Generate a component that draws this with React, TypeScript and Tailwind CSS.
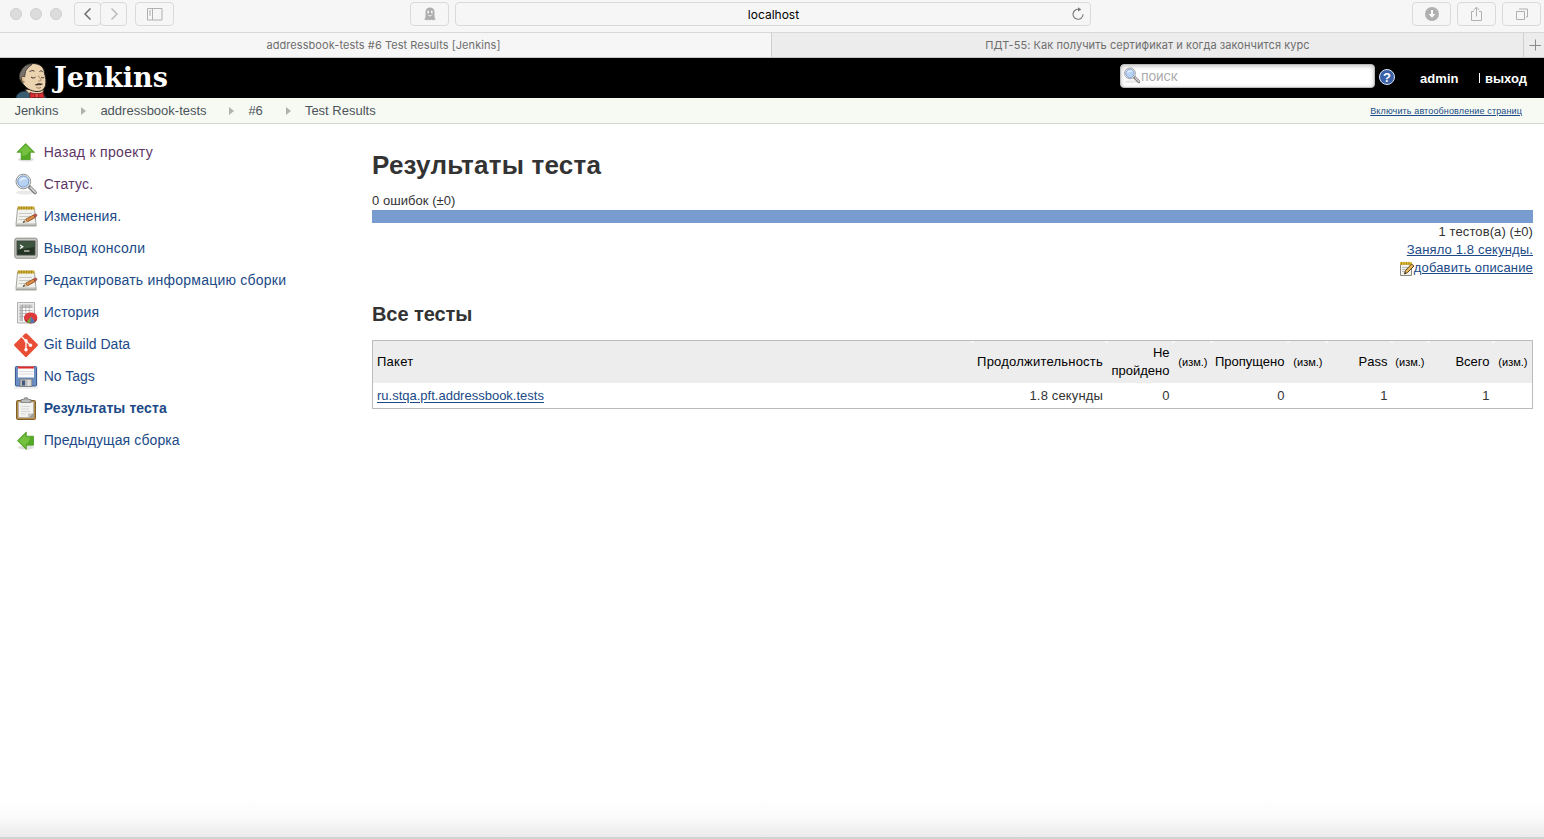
import React from 'react';

const SANS = "font-['Liberation_Sans',Arial,sans-serif]";

function Chevron({ className, d }: { className: string; d: string }) {
  return (
    <svg width="12" height="14" viewBox="0 0 12 14" fill="none" stroke="currentColor" strokeWidth="1.5" className={className}>
      <path d={d} />
    </svg>
  );
}

function ToolButton({ className = '', children }: { className?: string; children: React.ReactNode }) {
  return (
    <div className={'flex h-[24px] w-[39px] shrink-0 items-center justify-center rounded-[4px] border border-[#dadada] bg-[#f6f6f6] ' + className}>
      {children}
    </div>
  );
}

function Toolbar() {
  return (
    <div className="flex h-[33px] shrink-0 items-start border-b border-[#d8d8d8] bg-[#f6f6f6] pt-[2px]">
      <div className="flex h-[24px] w-[74px] items-center gap-[8px] pl-[10px]">
        <span className="size-[12px] rounded-full border border-[#cfcfcf] bg-[#dcdcdc]" />
        <span className="size-[12px] rounded-full border border-[#cfcfcf] bg-[#dcdcdc]" />
        <span className="size-[12px] rounded-full border border-[#cfcfcf] bg-[#dcdcdc]" />
      </div>
      <div className="flex">
        <div className="flex h-[24px] w-[27px] items-center justify-center rounded-[4px] border border-[#dadada]">
          <Chevron className="text-[#6f6f6f]" d="M8.500 1.500 3 7l5.500 5.500" />
        </div>
        <div className="-ml-px flex h-[24px] w-[27px] items-center justify-center rounded-[4px] border border-[#dadada]">
          <Chevron className="text-[#bcbcbc]" d="M3.500 1.500 9 7l-5.500 5.500" />
        </div>
      </div>
      <ToolButton className="ml-[8px]">
        <svg width="16" height="13" viewBox="0 0 16 13" fill="none" stroke="#b0b0b0">
          <path d="M.5.500h14.500v11.500H.5zM5.500.500V12M2 3h2M2 5h2M2 7h2" />
        </svg>
      </ToolButton>
      <ToolButton className="ml-[236px]">
        <svg width="12" height="14" viewBox="0 0 12 14" fill="#adadad">
          <path d="M6 .5C3.300.500 1.500 2.300 1.500 4.800V9c0 1.500-.4 2.600-1.500 3.800h2.200l.8.700 1-.7h1l1 .7 1-.7h1l1 .7.8-.7H12c-1.100-1.200-1.500-2.300-1.500-3.800V4.800C10.500 2.300 8.700.500 6 .5Z" />
          <ellipse cx="4.200" cy="5" rx=".9" ry="1.400" fill="#f6f6f6" />
          <ellipse cx="7.800" cy="5" rx=".9" ry="1.400" fill="#f6f6f6" />
          <path d="M3.700 7.500c.8 1.900 3.800 1.900 4.600 0" stroke="#f6f6f6" strokeWidth=".9" fill="none" />
        </svg>
      </ToolButton>
      <div className="ml-[6px] flex h-[24px] w-[636px] items-center rounded-[4px] border border-[#dadada]">
        <span className="mt-px ml-[17px] flex-1 text-center font-['Inter',sans-serif] text-[12px] text-black">localhost</span>
        <svg width="14" height="14" viewBox="0 0 14 14" className="mr-[5px] ml-[-3px]" fill="none" stroke="#777" strokeWidth="1.100">
          <path d="M7.500 2.300A5 5 0 1 0 12 7.200" />
          <path d="M7 .2 10.400 2.400 7 4.600z" fill="#777" stroke="none" />
        </svg>
      </div>
      <ToolButton className="ml-[321px]">
        <svg width="14" height="14" viewBox="0 0 14 14">
          <circle cx="7" cy="7" r="7" fill="#b0b0b0" />
          <path d="M6 3h2v4h2.400L7 10.800 3.600 7H6z" fill="#f8f8f8" />
        </svg>
      </ToolButton>
      <ToolButton className="ml-[6px]">
        <svg width="13" height="16" viewBox="0 0 13 16" fill="none" stroke="#b0b0b0" className="-mt-px">
          <path d="M4 5.500H1.500v9h10v-9H9M6.500 10.500V1.200M3.700 4l2.800-2.800L9.300 4" />
        </svg>
      </ToolButton>
      <ToolButton className="ml-[6px]">
        <svg width="14" height="13" viewBox="0 0 14 13" fill="none" stroke="#b0b0b0">
          <path d="M1.500 3.500h8v8h-8zM4 1h8.500v8H11" />
        </svg>
      </ToolButton>
    </div>
  );
}

function TabBar() {
  return (
    <div className="flex h-[25px] shrink-0 border-b border-[#c8c8c8] bg-[#ececec] font-['Inter',sans-serif] text-[11px] leading-[24px] text-[#6e6e6e]">
      <div className="w-[771px] bg-[#f6f6f6] pr-[4px] text-center"><span className="tracking-[0.06px]">addressbook-tests #6 Test Results [Jenkins]</span></div>
      <div className="w-[753px] border-x border-[#cfcfcf] text-center"><span className="tracking-[0.07px]">ПДТ-55: Как получить сертификат и когда закончится курс</span></div>
      <div className="flex flex-1 items-center justify-center pl-[2px]">
        <svg width="12" height="12" viewBox="0 0 12 12" stroke="#8a8a8a"><path d="M6.500 .5v11M.5 6.500h12" /></svg>
      </div>
    </div>
  );
}

function Butler() {
  return (
    <svg width="34" height="36" viewBox="0 0 34 36">
      <path d="M1 37c0-3 1-5.500 6-7.500l7-1 14 3 4 5.500z" fill="#3a5c72" stroke="#182c38" />
      <path d="M10 27.500l4 4 6 .5h7l2-4z" fill="#ecd3b0" stroke="#28231f" strokeWidth=".6" />
      <path d="M7.500 21C4 18 4 13 6 10c2-5 6-8.500 12-8.500 7 0 11.500 4 11.500 10 1.500 4 1.800 8 1 12-1.200 4-4 6-8.500 6-6 0-12-4-14.500-8.500z" fill="#ecd3b0" stroke="#28231f" />
      <path d="M17 2c-5 .3-8.500 2-11 7-1.500 2-2 5-1.300 8l2.300 2.500 1-3 1.700-2 .8-5c1.500-3 3.500-5 6.500-7z" fill="#77716c" stroke="#292624" strokeWidth=".7" />
      <path d="M9 14.500c-2-.8-3 .6-2.500 2.500.2 2 1.200 3.300 3 3" fill="#e2c096" stroke="#453526" strokeWidth=".8" />
      <path d="M14.500 10c1-1.700 3.500-1.800 5-.8M24.500 9.500c1-1 2.500-.8 3.500.7" fill="none" stroke="#352a22" strokeWidth=".9" />
      <path d="M16 15c1 1.300 3.500 1.300 4.500 0M26 15c.8 1 2.500 1 3.300.3" fill="none" stroke="#352a22" strokeWidth="1" />
      <path d="M23.500 13.500c.3 2.500 3 3 2.600 4.700-.5 1.300-2.300 1.200-3 .3" fill="none" stroke="#9a7654" strokeWidth=".8" />
      <path d="M19.500 22.500c1.500.3 2.500-1.400 4-1.200 1.500-.5 3 .3 4.500.5-1.200 1.600-2.800 1.600-4.200 1.100-1.300.8-3.300.6-4.300-.4z" fill="#40352e" />
      <path d="M21.500 25.500c1.500.8 3 .8 4.500 0" fill="none" stroke="#8a5846" strokeWidth=".8" />
      <path d="M15 30.500l6.500 2 7-2 .5 6-7.500-1.500-6.500 1.500z" fill="#d92f33" stroke="#6d1715" strokeWidth=".8" />
      <path d="M20 31.500h3.500v4H20z" fill="#ee4b4d" stroke="#6d1715" strokeWidth=".6" />
    </svg>
  );
}

function Magnifier({ size }: { size: number }) {
  return (
    <svg width={size} height={size} viewBox="0 0 24 24" className="shrink-0">
      <ellipse cx="11" cy="19.500" rx="9" ry="2" fill="#e9e9e9" />
      <path d="m15 13.500 6 6" stroke="#828282" strokeWidth="3.800" strokeLinecap="round" />
      <path d="m16.500 14.500 4.700 4.700" stroke="#d8d8d8" strokeWidth="1.600" strokeLinecap="round" />
      <circle cx="9.300" cy="8.500" r="7.300" fill="#f5f5f5" stroke="#8e8e8e" />
      <circle cx="9.300" cy="8.500" r="5.600" fill="#b7d1f2" stroke="#6d94c8" />
      <path d="M5 8.500C5.500 4.500 10.500 3 13.300 6c-2 0-6 .8-8.300 2.500z" fill="#e6f0fc" />
    </svg>
  );
}

function Notepad() {
  return (
    <svg width="24" height="24" viewBox="0 0 24 24">
      <path d="M3.500 3.500h17L22 19.500H2z" fill="#f1f1ee" stroke="#a3a39e" />
      <path d="M2 18.500h20.500v3H1.500z" fill="#a5a5a0" />
      <path d="M2.500 19h19" stroke="#dcdcd8" />
      <path d="M5 8.500h13M5 11.500h12M4.500 14.500h8" stroke="#c9c9c6" />
      <path d="M3.500 1.500h17v3h-17z" fill="#c9a92f" />
      <path d="M5 1.500v3M7.500 1.500v3M10 1.500v3M12.500 1.500v3M15 1.500v3M17.500 1.500v3" stroke="#9f7f18" strokeWidth=".8" />
      <path d="m11.500 14.200 8-4.200 2 2.400-8 4.400z" fill="#d98a45" stroke="#8d5423" strokeWidth=".8" />
      <path d="m19.300 10 1.700-1c1.400-.5 2.500 1 1.800 2l-1.500 1.200z" fill="#c65a4b" stroke="#8d4038" strokeWidth=".6" />
      <path d="m9 17.500 2.500-3.300 2 2.600z" fill="#ead2a8" stroke="#8d6a43" strokeWidth=".5" />
      <path d="m8.700 17.700 1.300-1.900.9 1.300z" fill="#222" />
    </svg>
  );
}

function SmallNotepad() {
  return (
    <svg width="16" height="16" viewBox="0 0 16 16">
      <path d="M1.500 3h11v11.500h-11z" fill="#f2f2ee" stroke="#888880" />
      <path d="M1 1.200h12v2.500H1z" fill="#dfb927" />
      <path d="M2.500.800v3M5 .8v3M7.500.800v3M10 .8v3" stroke="#9b7b12" strokeWidth=".8" />
      <path d="M3 6.500h7M3 8.500h5M3 10.500h3" stroke="#bbb" />
      <path d="m5.500 13 1-3.500 6-6.500 2.500 2-6.500 6.500z" fill="#e4b456" stroke="#54370f" strokeWidth=".9" />
      <path d="m5.500 13 .5-2 1.200 1.200z" fill="#222" />
    </svg>
  );
}

function Arrow({ left = false }: { left?: boolean }) {
  return (
    <svg width="24" height="24" viewBox="0 0 24 24">
      <ellipse cx="12" cy="18.500" rx="8" ry="2" fill="#dfdfdf" />
      <g transform={left ? 'matrix(0 1 1 0 1 0)' : undefined}>
        <path d="M11.700 2.500 20.500 11.300H16.200V18.500H7.200v-7.200H3z" fill="#54a924" stroke="#4b9a24" strokeWidth=".8" strokeLinejoin="round" />
        <path d="M11.700 3.800 5 10.600h3.200v4.400c3-.3 6-1.500 7-4.400h3.200z" fill="#7fc94a" opacity=".75" />
      </g>
    </svg>
  );
}

function Console() {
  return (
    <svg width="24" height="24" viewBox="0 0 24 24">
      <rect x=".8" y="1.200" width="22.400" height="20" rx="2" fill="#c9cac6" stroke="#888a85" />
      <rect x="3" y="4" width="18" height="14" fill="#233423" stroke="#4a4f48" />
      <path d="M3.500 4.500h17V10l-17 3z" fill="#48634a" opacity=".7" />
      <path d="m6 8 2.800 1.700L6 11.500M10 14h5.500" stroke="#fff" strokeWidth="1.200" fill="none" />
    </svg>
  );
}

function Graph() {
  return (
    <svg width="24" height="24" viewBox="0 0 24 24">
      <path d="M3.500 1.500h17v20.500h-17z" fill="#ececec" stroke="#b0b0b0" />
      <path d="M5.500 3.500h13v16.500h-13z" fill="#fdfdfd" />
      <path d="M5.500 3.500h13v3h-13zM5.500 3.500h3V20h-3z" fill="#c2c2c2" />
      <path d="M5.500 6.500h13M5.500 9.500h13M5.500 12.500h13M5.500 15.500h13M8.500 3.500v16.500M11.800 3.500v16.500M15.200 3.500v16.500" stroke="#aaa" strokeWidth=".8" />
      <ellipse cx="16.700" cy="17.500" rx="6.500" ry="5" fill="#9f1f1f" />
      <ellipse cx="16.700" cy="16.200" rx="6.500" ry="4.800" fill="#dd3b3b" />
      <path d="m17 15.500-.5 6.500c-1.500 0-2.800-.3-3.800-.9z" fill="#6fa83c" />
      <path d="m17 15.500 4 5.300c-1.200.8-2.800 1.200-4.500 1.200z" fill="#4f78bb" />
    </svg>
  );
}

function Git() {
  return (
    <svg width="24" height="24" viewBox="0 0 24 24">
      <path d="M10.900.7a1.600 1.600 0 0 1 2.200 0L23.400 10.900a1.600 1.600 0 0 1 0 2.200L13.100 23.400a1.600 1.600 0 0 1-2.200 0L.6 13.100a1.600 1.600 0 0 1 0-2.200z" fill="#e84e35" />
      <path d="m7.800 3.800 4.200 4.200v8.500M12 8l4 4" stroke="#fff" strokeWidth="1.300" fill="none" />
      <circle cx="12" cy="7.800" r="1.700" fill="#fff" />
      <circle cx="12" cy="16.800" r="1.700" fill="#fff" />
      <circle cx="16.500" cy="12.300" r="1.700" fill="#fff" />
    </svg>
  );
}

function Floppy() {
  return (
    <svg width="24" height="24" viewBox="0 0 24 24">
      <path d="M0 .5h24V24H0z" fill="#f0f0f0" />
      <rect x="1.500" y="1.500" width="21" height="19.500" rx="1" fill="#6b8fc4" stroke="#3c5c8f" />
      <path d="M4 1.500h16v11H4z" fill="#fafafa" />
      <path d="M4 1.500h16v2H4z" fill="#e22923" />
      <path d="M5 6.500h14M5 9h14" stroke="#dcdcdc" />
      <path d="M6 14h12v7.500H6z" fill="#b9bab7" stroke="#686868" strokeWidth=".6" />
      <path d="M8 15.500h3v5H8z" fill="#41597f" />
      <path d="M13.500 15h3v6h-3z" fill="#dedede" />
    </svg>
  );
}

function Clipboard() {
  return (
    <svg width="24" height="24" viewBox="0 0 24 24">
      <rect x="2.500" y="3.500" width="19" height="19" rx="1" fill="#b58a45" stroke="#80602a" />
      <path d="M4.500 5h15v15.500h-15z" fill="#f2f2f0" stroke="#aaa" strokeWidth=".6" />
      <path d="M7 9.500h9M7 12h8M7 14.500h9M7 17h5" stroke="#d6d6d6" />
      <path d="M14 20.500v-4h5z" fill="#c2c2c2" />
      <path d="M14.500 20.500l5-4.500v4.500z" fill="#9a9a98" />
      <path d="M7 2.500h2.500L10.500.800h3l1 1.700H17v3H7z" fill="#a6a7a3" stroke="#757672" strokeWidth=".7" />
      <path d="M8 4h8" stroke="#d5d5d2" />
    </svg>
  );
}

function Header() {
  return (
    <header className={'flex h-[40px] shrink-0 bg-black text-white ' + SANS}>
      <div className="flex flex-1 items-start pl-[15px] pt-[4px]">
        <Butler />
        <span className="ml-[5px] font-['DejaVu_Serif',serif] text-[27px] leading-[31px] font-bold tracking-[0.1px]">Jenkins</span>
      </div>
      <div className="mt-[6px] flex h-[24px] w-[255px] items-center rounded-[4px] border border-[#bbb] bg-white pl-[2px] shadow-[inset_0_1px_4px_#bbb]">
        <Magnifier size={18} />
        <span className="-mt-px font-['Inter',sans-serif] text-[13px] leading-[20px] tracking-[-0.2px] text-[#aaa]">поиск</span>
      </div>
      <div className="ml-[4px] mt-[11px] flex size-[16px] items-center justify-center rounded-full border border-[#dbe5f6] bg-[#3a60a8] text-[13px] leading-none font-bold">?</div>
      <div className="ml-[25px] w-[58px] pt-[11px] text-[13px] leading-[20px] font-bold tracking-[0.05px]">admin</div>
      <div className="flex w-[66px] pt-[11px] text-[13px] leading-[20px] font-bold">
        <span className="mt-[4px] mr-[5px] ml-[1px] h-[10px] w-px bg-white" />
        <span>выход</span>
      </div>
    </header>
  );
}

const crumbs: [string, string][] = [
  ['Jenkins', 'w-[86px]'],
  ['addressbook-tests', 'w-[148px]'],
  ['#6', 'w-[56.500px]'],
  ['Test Results', 'w-[90px]'],
];

function Breadcrumbs() {
  return (
    <nav className={'flex h-[26px] shrink-0 items-center border-b border-[#d3d7cf] bg-[#f6faf2] pl-[14.400px] text-[13px] text-[#4d545d] ' + SANS}>
      {crumbs.map(([label, width], i) => (
        <div key={label} className={'flex items-center justify-between whitespace-nowrap ' + width}>
          <span>{label}</span>
          {i < 3 && <svg width="5" height="8" viewBox="0 0 5 8" className="mr-[14px]"><path d="M0 0 5 4 0 8z" fill="#b0b2ae" /></svg>}
        </div>
      ))}
      <a className="mt-[3px] mr-[22px] ml-auto text-[9px] tracking-[0.13px] text-[#204a87] underline">Включить автообновление страниц</a>
    </nav>
  );
}

const tasks: { label: string; icon: React.ReactNode; style: string }[] = [
  { label: 'Назад к проекту', icon: <Arrow />, style: 'tracking-[0.3px] text-[#5c3566]' },
  { label: 'Статус.', icon: <Magnifier size={24} />, style: 'tracking-[0.2px] text-[#5c3566]' },
  { label: 'Изменения.', icon: <Notepad />, style: 'tracking-[0.1px] text-[#204a87]' },
  { label: 'Вывод консоли', icon: <Console />, style: 'tracking-[0.22px] text-[#204a87]' },
  { label: 'Редактировать информацию сборки', icon: <Notepad />, style: 'tracking-[0.23px] text-[#204a87]' },
  { label: 'История', icon: <Graph />, style: 'tracking-[0.2px] text-[#204a87]' },
  { label: 'Git Build Data', icon: <Git />, style: 'text-[#204a87]' },
  { label: 'No Tags', icon: <Floppy />, style: 'text-[#204a87]' },
  { label: 'Результаты теста', icon: <Clipboard />, style: 'font-bold tracking-[0.1px] text-[#204a87]' },
  { label: 'Предыдущая сборка', icon: <Arrow left />, style: 'tracking-[0.1px] text-[#204a87]' },
];

function Sidebar() {
  return (
    <aside className="w-[372px] shrink-0 pt-[12px] pl-[14px]">
      {tasks.map((t) => (
        <div key={t.label} className="flex h-[32px] items-center gap-[5.700px]">
          <span className="mt-[2px]">{t.icon}</span>
          <a className={'text-[14px] leading-[20px] ' + t.style}>{t.label}</a>
        </div>
      ))}
    </aside>
  );
}

const head = ['Пакет', 'Продолжительность', 'Не пройдено', '(изм.)', 'Пропущено', '(изм.)', 'Pass', '(изм.)', 'Всего', '(изм.)'];
const row = ['ru.stqa.pft.addressbook.tests', '1.8 секунды', '0', '', '0', '', '1', '', '1', ''];
const COLS = 'grid grid-cols-[600px_134px_67px_38px_77px_38px_65px_37px_65px_38px] items-center';

function headStyle(label: string) {
  if (label === '(изм.)') return 'justify-end pr-[4.500px] text-right text-[11px]';
  if (label === 'Пакет') return 'pl-[4px] tracking-[0.25px]';
  if (label === 'Продолжительность') return 'justify-end pr-[4px] text-right tracking-[0.22px]';
  return 'justify-end pr-[4.500px] text-right';
}

function Results() {
  return (
    <main className="w-[1161px] shrink-0 text-[13px] leading-[18px] text-[#333]">
      <h1 className="mt-[25px] text-[26px] leading-[32px] font-bold tracking-[0.22px]">Результаты теста</h1>
      <div className="mt-[11px] tracking-[0.05px]">0 ошибок (±0)</div>
      <div className="h-[13px] bg-[#789bd0]" />
      <div className="flex flex-col items-end">
        <span className="tracking-[0.1px]">1 тестов(а) (±0)</span>
        <a className="tracking-[0.15px] text-[#204a87] underline">Заняло 1.8 секунды.</a>
        <a className="flex h-[18px] text-[#204a87]"><span className="mt-[2px] h-[16px]"><SmallNotepad /></span><span className="-ml-px tracking-[0.15px] underline">добавить описание</span></a>
      </div>
      <h2 className="mt-[25px] text-[20px] leading-[24px] font-bold tracking-[-0.08px]">Все тесты</h2>
      <div className="mt-[14px] border border-[#bbb]">
        <div className={COLS + ' h-[42px] bg-[#ededed] text-black'}>
          {head.map((h, i) => (
            <div key={i} className="h-full">
              <div className={'-mr-px ml-auto h-[2px] w-[3px] ' + (i < 9 ? 'bg-[#f8f8f8]' : '')} />
              <div className={'-mt-[2px] flex h-full items-center ' + headStyle(h)}>{h}</div>
            </div>
          ))}
        </div>
        <div className={COLS + ' h-[25px]'}>
          {row.map((c, i) => (
            <div key={i} className={i === 0 ? 'px-[4px]' : i === 1 ? 'pr-[4px] text-right tracking-[0.15px]' : 'pr-[4.500px] text-right'}>
              {i === 0 ? <a className="text-[#204a87] underline underline-offset-2">{c}</a> : c}
            </div>
          ))}
        </div>
      </div>
    </main>
  );
}

export default function App() {
  return (
    <div className="flex h-[839px] w-[1544px] flex-col overflow-hidden bg-white">
      <Toolbar />
      <TabBar />
      <Header />
      <Breadcrumbs />
      <div className={'flex flex-1 ' + SANS}>
        <Sidebar />
        <Results />
      </div>
      <div className="h-[42px] shrink-0 border-b-2 border-[#d3d3d3] bg-linear-to-b from-white via-[#fbfbfb] to-[#ebebeb]" />
    </div>
  );
}
